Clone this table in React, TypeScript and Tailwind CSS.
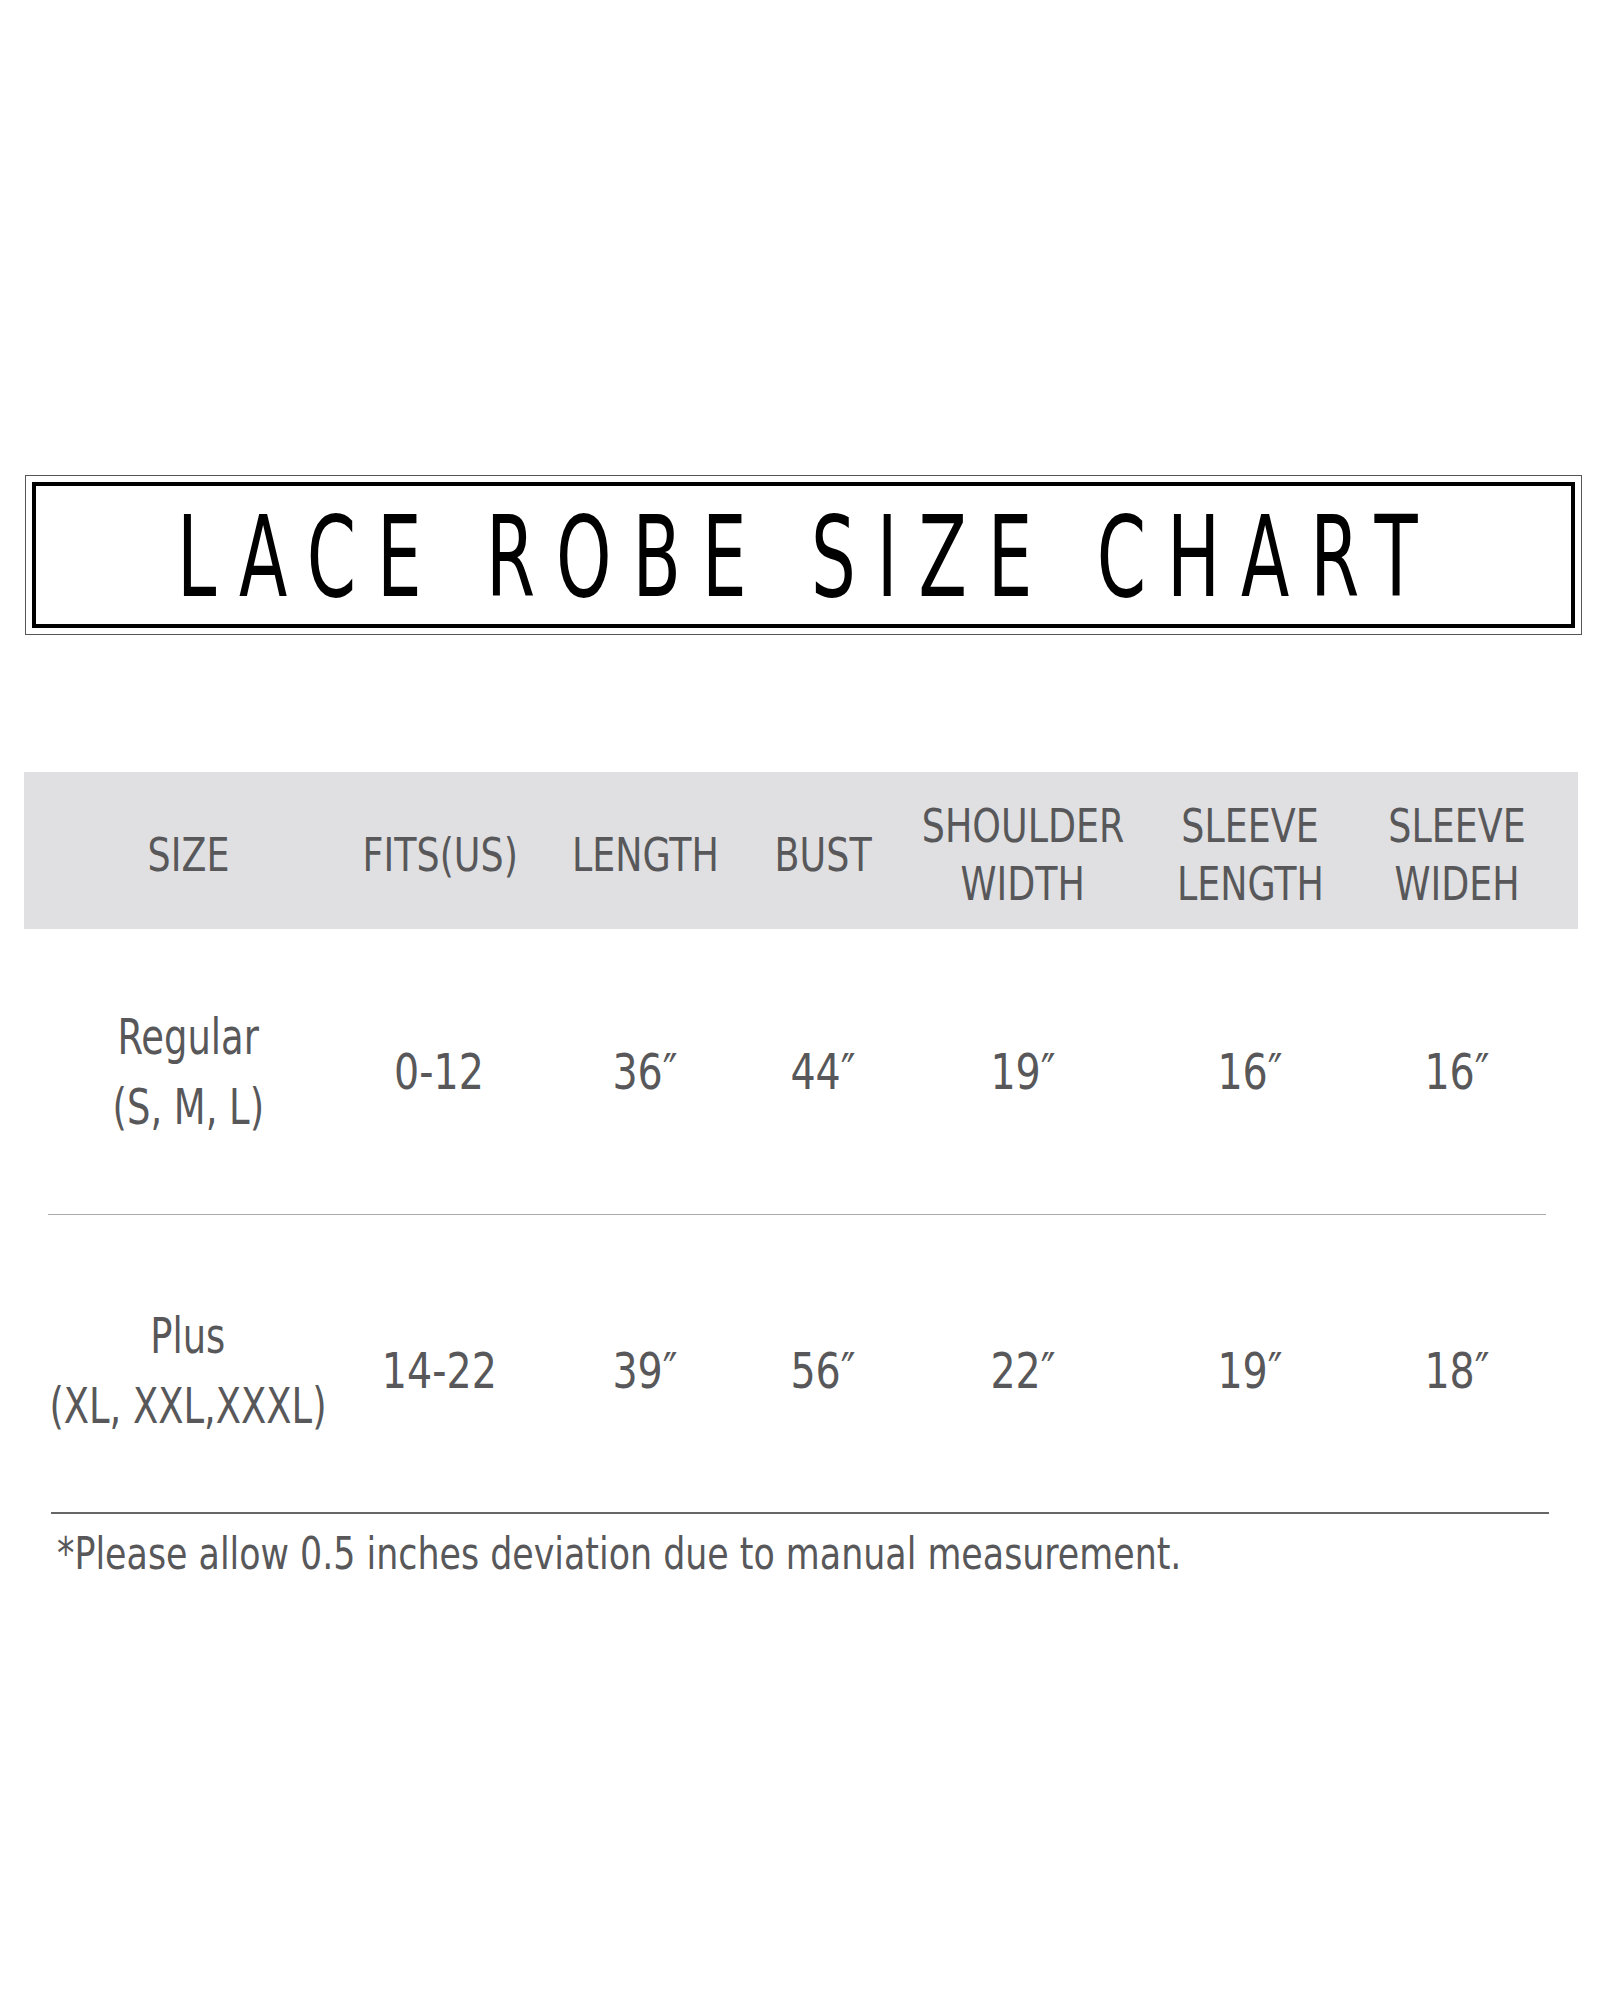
import React from "react";

const FONT = { fontFamily: '"DejaVu Sans Condensed", "Liberation Sans Narrow", "Liberation Sans", sans-serif' };

const cols = "grid grid-cols-[328px_174px_238px_118px_282px_172px_242px]";

const rows = [
  { size: ["Regular", "(S, M, L)"], vals: ["0-12", "36\u2033", "44\u2033", "19\u2033", "16\u2033", "16\u2033"] },
  { size: ["Plus", "(XL, XXL,XXXL)"], vals: ["14-22", "39\u2033", "56\u2033", "22\u2033", "19\u2033", "18\u2033"] },
];

function N({ children }: { children: React.ReactNode }) {
  return <span className="inline-block whitespace-nowrap scale-x-[0.88]">{children}</span>;
}

function S({ children }: { children: React.ReactNode }) {
  return <span className="inline-block whitespace-nowrap scale-x-[0.82]">{children}</span>;
}

function Row({ r, extra }: { r: (typeof rows)[number]; extra: string }) {
  return (
    <div className={`${cols} ${extra} items-center text-center`}>
      <div className="text-[50px] leading-[70px] flex flex-col items-center">
        <S>{r.size[0]}</S>
        <S>{r.size[1]}</S>
      </div>
      {r.vals.map((v, i) => (
        <div key={i} className="text-[50px] leading-none">
          <N>{v}</N>
        </div>
      ))}
    </div>
  );
}

export default function App() {
  return (
    <div className="w-[1601px] h-[2000px] bg-white text-[#58585a]" style={FONT}>
      <div className="pt-[475px] pl-[25px] pr-[19px]">
        <div className="h-[160px] border border-[#555] p-[6px]">
          <div className="h-full border-[4px] border-black flex items-center justify-center pr-[12px]">
            <span className="inline-block whitespace-nowrap scale-x-[0.7] text-[112px] leading-none text-black tracking-[30px] pl-[30px] pt-[4px]">
              LACE ROBE SIZE CHART
            </span>
          </div>
        </div>
      </div>

      <div className="mt-[137px] ml-[24px] w-[1554px]">
        <div className={`${cols} h-[157px] pt-[9px] bg-[#e0e0e2] items-center text-center text-[46px] leading-[58px]`}>
          <div><N>SIZE</N></div>
          <div><N>FITS(US)</N></div>
          <div><N>LENGTH</N></div>
          <div><N>BUST</N></div>
          <div className="flex flex-col items-center"><N>SHOULDER</N><N>WIDTH</N></div>
          <div className="flex flex-col items-center"><N>SLEEVE</N><N>LENGTH</N></div>
          <div className="flex flex-col items-center"><N>SLEEVE</N><N>WIDEH</N></div>
        </div>

        <Row r={rows[0]} extra="h-[285px]" />
      </div>

      <div className="ml-[48px] w-[1498px] h-px bg-[#aaaaaa]" />

      <div className="ml-[24px] w-[1554px]">
        <Row r={rows[1]} extra="h-[297px] pt-[14px]" />
      </div>

      <div className="ml-[51px] w-[1498px] h-[2px] bg-[#666666]" />

      <div className="ml-[57px] mt-[18px] text-[44px] leading-none">
        <span className="inline-block whitespace-nowrap scale-x-[0.88] origin-left">
          *Please allow 0.5 inches deviation due to manual measurement.
        </span>
      </div>
    </div>
  );
}
